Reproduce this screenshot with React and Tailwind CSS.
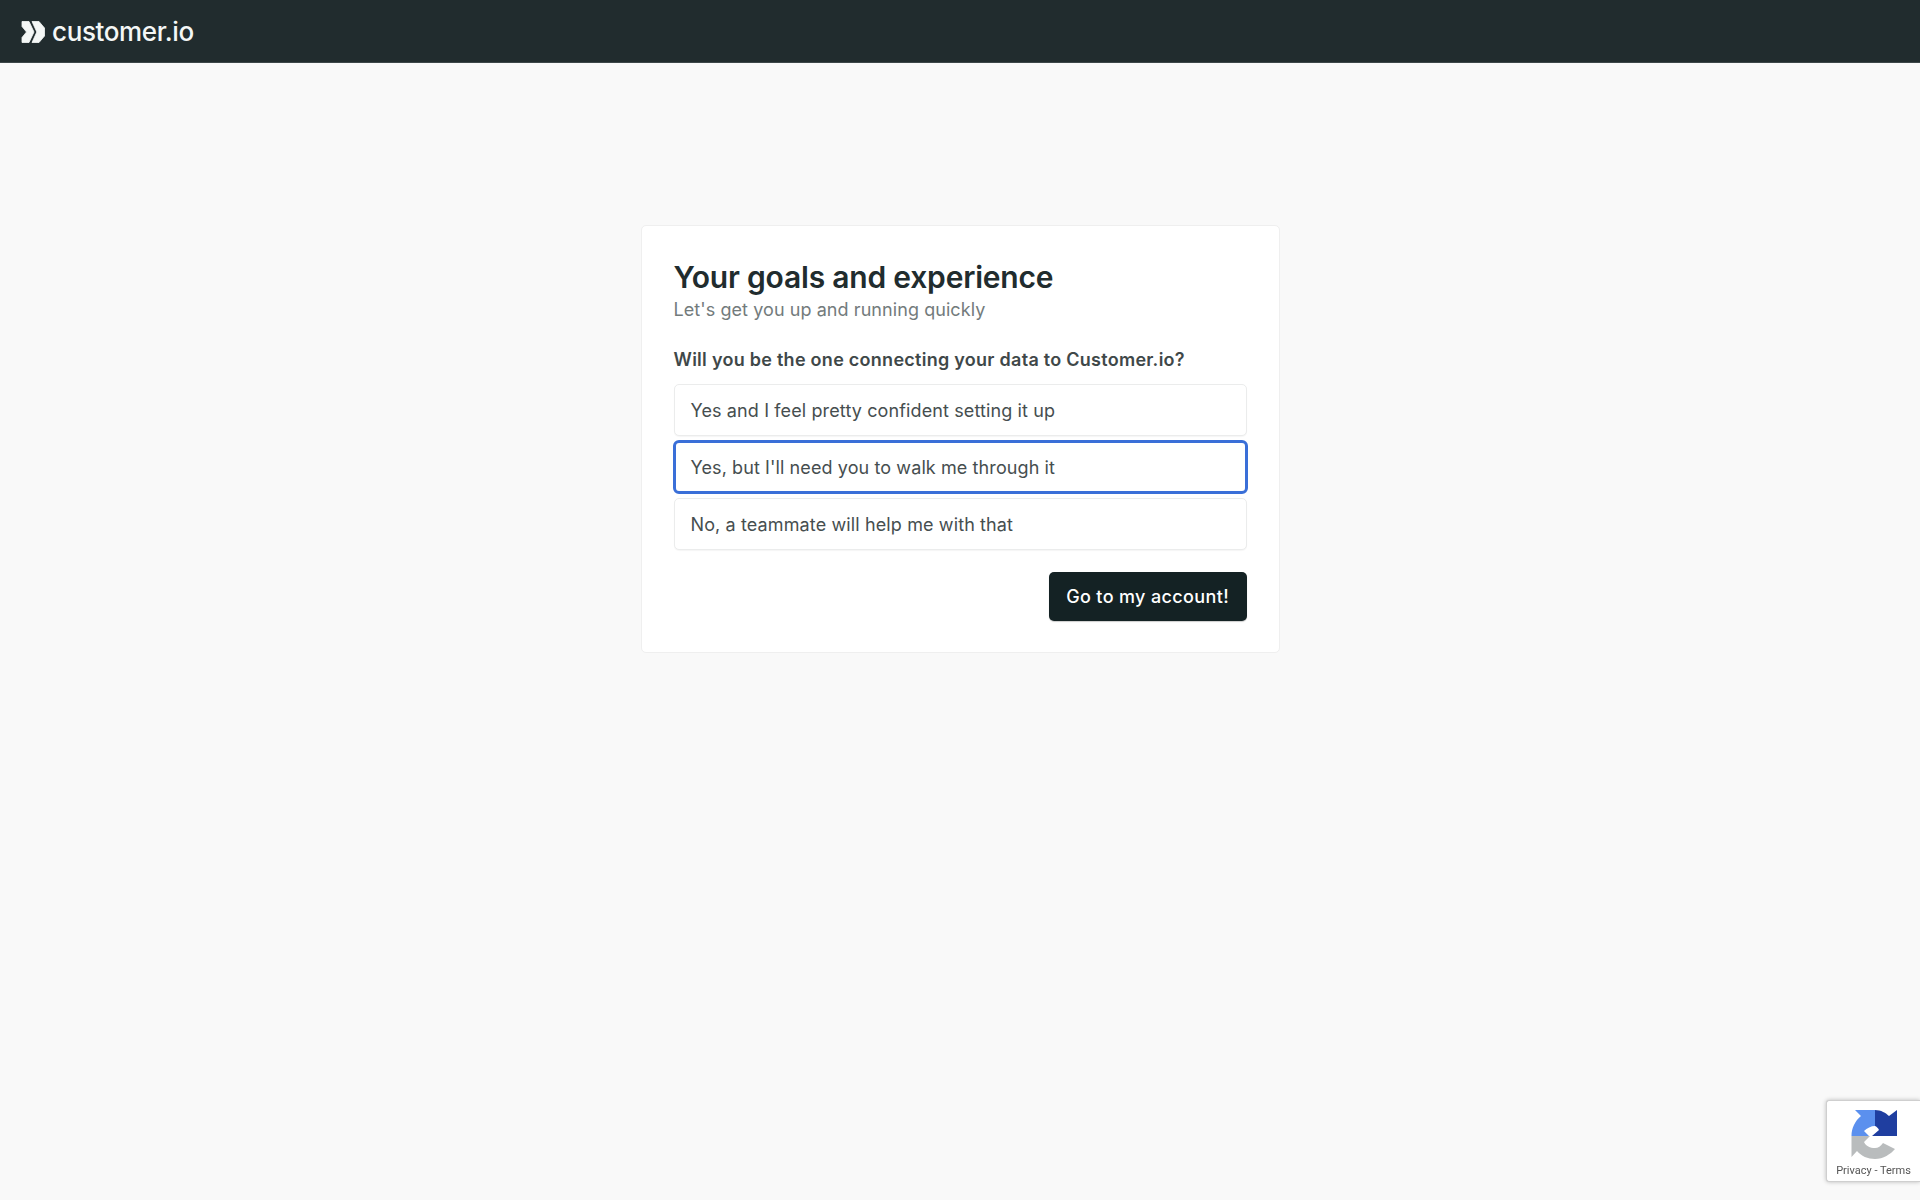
export default function App() {
  const opts = [
    ["Yes and I feel pretty confident setting it up", false],
    ["Yes, but I'll need you to walk me through it", true],
    ["No, a teammate will help me with that", false],
  ];
  return (
    <div className="min-h-[1200px] bg-[#f9f9f9] font-['Inter',sans-serif] flex flex-col">
      <header className="h-[63px] bg-[#212c2e] border-b border-[#3d4749] flex items-center pl-[21px] pt-[2px] gap-[7px] shrink-0">
        <svg width="24" height="24" viewBox="0 0 24 24" className="shrink-0">
          <path d="M1 1.5 L8 1.5 L13 12 L8 22.5 L1 22.5 L1 17.5 L5.5 12 L1 6.5 Z" fill="#f4f7f6" stroke="#f4f7f6" strokeWidth="0.8" strokeLinejoin="round" />
          <path d="M11 1.5 L18 1.5 L23.5 8 L23.5 16 L18 22.5 L11 22.5 L15.8 12 Z" fill="#f4f7f6" stroke="#f4f7f6" strokeWidth="0.8" strokeLinejoin="round" />
        </svg>
        <span className="text-[26px] leading-none font-medium tracking-[-0.38px] text-[#f4f7f6]">customer.io</span>
      </header>
      <main className="flex justify-center pt-[162px]">
        <div className="w-[639px] h-[428px] bg-white border border-[#efefef] rounded-[5px] px-[32px] pt-[33px]">
          <h1 className="text-[30px] leading-[36px] font-semibold text-[#212c2e] tracking-[-0.2px]">Your goals and experience</h1>
          <p className="text-[18px] leading-[26px] text-[#737b7c] tracking-[0.07px] mt-[2px]">Let's get you up and running quickly</p>
          <p className="text-[18px] leading-[26px] font-semibold text-[#3f4849] tracking-[0.27px] mt-[24px]">Will you be the one connecting your data to Customer.io?</p>
          <div className="flex flex-col gap-[5px] mt-[11px]">
            {opts.map(([t, sel]) => (
              <div
                key={t}
                className={
                  sel
                    ? "h-[54px] -my-[1px] flex items-center rounded-[6px] border-[3px] border-[#3a6fd8] pl-[15px] -mx-[1px] text-[18px] tracking-[0.1px] text-[#464e4f] bg-white"
                    : "h-[52px] flex items-center rounded-[5px] border border-[#ebecec] pl-[16px] text-[18px] tracking-[0.12px] text-[#464e4f] bg-white shadow-[0_1px_1px_rgba(0,0,0,0.04)]"
                }
              >
                {t}
              </div>
            ))}
          </div>
          <div className="flex justify-end mt-[22px]">
            <button className="h-[49px] px-[17.5px] rounded-[5px] bg-[#142224] text-white text-[18px] font-medium tracking-[0.36px] shadow-[0_1px_1px_rgba(0,0,0,0.2)]">Go to my account!</button>
          </div>
        </div>
      </main>
      <div className="fixed right-0 bottom-[18px] w-[94px] h-[82px] bg-white rounded-l-[3px] border border-[#cfcfcf] border-r-0 shadow-[0_0_4px_rgba(0,0,0,0.25)] flex flex-col items-center">
        <svg width="47" height="51" viewBox="9 5 47 51" className="mt-[8px] ml-[2px] shrink-0">
          <path d="M33 6 L13 6 L19 12 C13 17 9.5 24 9.5 32 L27 32 L22 27 C25 24 29 22 33 22 Z" fill="#5b90ee" />
          <path d="M33 6 C39 6 44 9 47 12 L55 6 L55 32 L30 32 L37 26 C36 24 34.5 22.5 33 22 Z" fill="#1f3ea0" />
          <path d="M9.5 32 L28 32 L22 38 C24 42 28 44 33 44 C36 44 39 42 41 39 L53 45 C49 50 41 55 33 55 C26 55 19 52 15 47 L9.5 53 Z" fill="#b9bcbd" />
        </svg>
        <span className="text-[11px] leading-none font-['Roboto',sans-serif] text-[#555] mt-[5px] whitespace-nowrap">Privacy - Terms</span>
      </div>
    </div>
  );
}
